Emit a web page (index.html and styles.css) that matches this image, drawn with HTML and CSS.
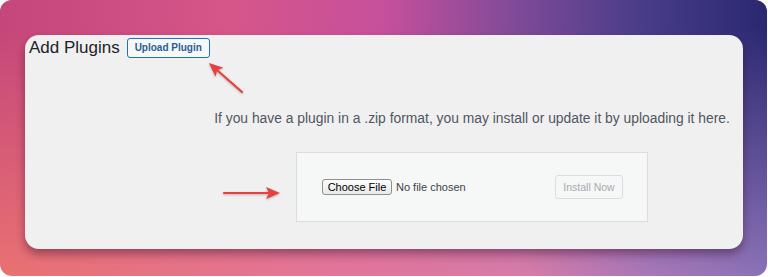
FILE: index.html
```html
<!DOCTYPE html>
<html lang="en">
<head>
    <meta charset="UTF-8">
    <meta name="viewport" content="width=device-width, initial-scale=1.0">
    <title>Add Plugins</title>
    <link rel="stylesheet" href="styles.css">
</head>
<body>
    <div class="frame">
        <div class="card">
            <div class="page-header">
                <h1 class="page-title">Add Plugins</h1>
                <a class="title-action" href="#">Upload Plugin</a>
            </div>

            <div class="upload-area">
                <p class="install-help">If you have a plugin in a .zip format, you may install or update it by uploading it here.</p>

                <form class="upload-form">
                    <label class="file-picker">
                        <input type="file" class="file-input" name="pluginzip">
                        <span class="file-button">Choose File</span>
                        <span class="file-name">No file chosen</span>
                    </label>
                    <button type="submit" class="install-button" disabled>Install Now</button>
                </form>
            </div>

            <!-- annotation arrows drawn over the card -->
            <svg class="annotations" width="718" height="214" viewBox="0 0 718 214">
                <g transform="translate(217 57) rotate(-138.7)">
                    <line x1="0" y1="0" x2="33" y2="0" class="arrow-line"/>
                    <path d="M44 0 L30 -6 L33 0 L30 6 Z" class="arrow-head"/>
                </g>
                <g transform="translate(199 158)">
                    <line x1="0" y1="0" x2="45" y2="0" class="arrow-line"/>
                    <path d="M56 0 L42 -6 L45 0 L42 6 Z" class="arrow-head"/>
                </g>
            </svg>
        </div>
    </div>
</body>
</html>
```

FILE: styles.css
```css
* {
    margin: 0;
    padding: 0;
    box-sizing: border-box;
}

body {
    background-color: #fff;
    font-family: 'Liberation Sans', Arial, sans-serif;
    color: #1d2327;
}

/* gradient backdrop */
.frame {
    position: relative;
    width: 767px;
    height: 276px;
    border-radius: 12px;
    padding: 35px 24px 0 25px;
    overflow: hidden;
    background: linear-gradient(to right, #ea7272 0%, #e2769a 45%, #d87ca8 68%, #a878b8 85%, #8a72b8 100%);
}

.frame::before {
    content: "";
    position: absolute;
    top: 0;
    left: 0;
    right: 0;
    bottom: 0;
    background: linear-gradient(to right, #c4467a 0%, #d6568a 30%, #c6509c 50%, #7c4a98 68%, #483c88 84%, #2a2870 100%);
    -webkit-mask-image: linear-gradient(to bottom, #000 0%, #000 10%, transparent 100%);
    mask-image: linear-gradient(to bottom, #000 0%, #000 10%, transparent 100%);
}

.card {
    position: relative;
    z-index: 1;
    height: 214px;
    background-color: #f0f0f1;
    border-radius: 14px;
    box-shadow: 0 5px 10px rgba(40, 0, 30, 0.4);
}

.page-header {
    display: flex;
    align-items: center;
    height: 24px;
    padding-left: 4px;
    padding-top: 2px;
}

.page-title {
    font-size: 17px;
    font-weight: 400;
    line-height: 20px;
    color: #1d2327;
}

.title-action {
    margin-left: 7px;
    display: inline-block;
    height: 20px;
    width: 83px;
    border: 1px solid #2271b1;
    border-radius: 3px;
    background-color: #f6f7f7;
    color: #2a5f92;
    font-size: 10px;
    font-weight: bold;
    line-height: 18px;
    text-align: center;
    text-decoration: none;
}

.upload-area {
    display: flex;
    flex-direction: column;
    align-items: center;
    padding-left: 176px;
}

.install-help {
    margin-top: 50px;
    font-size: 13.85px;
    line-height: 18px;
    color: #50575e;
    white-space: nowrap;
}

.upload-form {
    margin-top: 25px;
    width: 352px;
    height: 70px;
    display: flex;
    align-items: center;
    justify-content: space-between;
    padding: 0 24px 0 25px;
    background-color: #f6f7f7;
    border: 1px solid #dcdcde;
}

.file-picker {
    display: flex;
    align-items: center;
    gap: 4px;
    font-size: 11px;
    cursor: pointer;
}

.file-input {
    display: none;
}

.file-button {
    display: inline-block;
    width: 70px;
    height: 16px;
    line-height: 14px;
    text-align: center;
    color: #000;
    border: 1px solid #8f8f8f;
    border-radius: 3px;
    background: linear-gradient(#fdfdfd, #e9e9e9);
}

.file-name {
    color: #3c434a;
}

.install-button {
    width: 68px;
    height: 24px;
    font-family: 'Liberation Sans', Arial, sans-serif;
    font-size: 10.5px;
    color: #a7aaad;
    background-color: #f6f7f7;
    border: 1px solid #dcdcde;
    border-radius: 3px;
}

.annotations {
    position: absolute;
    top: 0;
    left: 0;
    pointer-events: none;
    filter: drop-shadow(0 1px 1px rgba(0, 0, 0, 0.25));
}

.arrow-line {
    stroke: #e8403f;
    stroke-width: 2.2;
    stroke-linecap: round;
}

.arrow-head {
    fill: #e8403f;
}
```
